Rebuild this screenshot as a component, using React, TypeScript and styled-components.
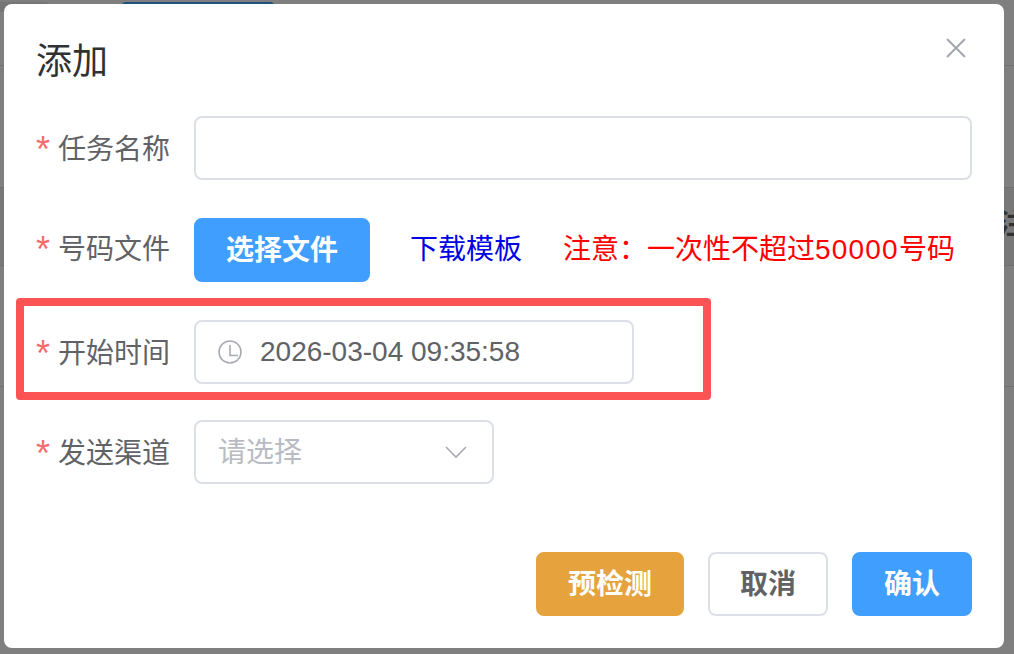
import * as React from 'react'
import styled, { createGlobalStyle } from 'styled-components'

const cjkStack = '"Liberation Sans", "Noto Sans CJK SC", sans-serif';

const GlobalStyle = createGlobalStyle`
    html, body {
        margin: 0;
        padding: 0;
        background: #7f7f7f;
    }
    * {
        box-sizing: border-box;
    }
`;

//=================================/
// what shows through the mask
const Overlay = styled.div`
    position: relative;
    width: 1014px;
    height: 654px;
    padding: 4px 10px 6px 4px;
    background: #7f7f7f;
    overflow: hidden;
    font-family: ${cjkStack};
`;

const PageButton = styled.div`
    position: absolute;
    top: 2px;
    left: 121px;
    width: 154px;
    height: 10px;
    border-radius: 6px;
    background: #20507f;
`;

const PageTab = styled.div`
    position: absolute;
    top: 2px;
    left: 0;
    width: 50px;
    height: 10px;
    border-radius: 0 6px 0 0;
    background: #767676;
`;

const PageLine = styled.div<{ $top: number }>`
    position: absolute;
    top: ${props => props.$top}px;
    left: 0;
    width: 100%;
    height: 1px;
    background: #707070;
`;

const PageBand = styled.div`
    position: absolute;
    top: 187px;
    left: 0;
    width: 100%;
    height: 79px;
    border-top: 1px solid #6f6f6f;
    border-bottom: 1px solid #6f6f6f;
    background: #787878;
`;

const PageGlyph = styled.span`
    position: absolute;
    top: 207px;
    left: 998px;
    font-size: 28px;
    line-height: 36px;
    font-weight: 700;
    color: #303133;
`;
//=================================/

const Dialog = styled.div`
    position: relative;
    width: 1000px;
    height: 644px;
    padding: 0 32px;
    border-radius: 8px;
    background: #fff;
`;

const Header = styled.div`
    display: flex;
    justify-content: space-between;
    height: 112px;
    padding-top: 33px;
`;

const Title = styled.h2`
    margin: 0;
    font-size: 36px;
    line-height: 50px;
    font-weight: 400;
    color: #303133;
`;

const CloseIcon = styled.svg`
    width: 20px;
    height: 20px;
    margin: 1px 6px 0 0;
    stroke: #a3a6ad;
    stroke-width: 2;
    fill: none;
`;

const Row = styled.div<{ $gap: number }>`
    position: relative;
    display: flex;
    align-items: center;
    height: 64px;
    margin-bottom: ${props => props.$gap}px;
`;

const Label = styled.label<{ $drop: number }>`
    display: flex;
    width: 158px;
    height: 40px;
    margin-top: ${props => props.$drop}px;
    flex: none;
    font-size: 28px;
    line-height: 40px;
    color: #606266;
`;

const Star = styled.span`
    width: 22px;
    font-size: 36px;
    line-height: 40px;
    color: #f56c6c;
`;

const Field = styled.div<{ $width: string }>`
    display: flex;
    align-items: center;
    width: ${props => props.$width};
    height: 64px;
    padding: 0 22px;
    border: 2px solid #dcdfe6;
    border-radius: 8px;
    background: #fff;
    font-size: 28px;
    color: #606266;
`;

const ClockIcon = styled.svg`
    width: 24px;
    height: 24px;
    margin-right: 18px;
    flex: none;
    fill: none;
    stroke: #a8abb2;
    stroke-width: 1.6;
`;

const Placeholder = styled.span`
    flex: 1;
    margin-bottom: 4px;
    color: #b8bbc2;
`;

const ChevronIcon = styled.svg`
    width: 22px;
    height: 13px;
    margin-right: 3px;
    flex: none;
    fill: none;
    stroke: #a8abb2;
    stroke-width: 1.6;
`;

const Button = styled.button<{ $bg: string; $fg: string; $line: string; $width: number }>`
    width: ${props => props.$width}px;
    height: 64px;
    padding: 0 0 4px;
    flex: none;
    border: 2px solid ${props => props.$line};
    border-radius: 8px;
    background: ${props => props.$bg};
    color: ${props => props.$fg};
    font-family: inherit;
    font-size: 28px;
    font-weight: 700;
`;

const DownloadLink = styled.a`
    margin: 0 0 6px 40px;
    font-size: 28px;
    color: #0000e6;
`;

const Notice = styled.span`
    margin: 0 0 6px 41px;
    font-size: 28px;
    color: #ff0000;
    white-space: nowrap;
`;

const NoticeDigits = styled.span`
    letter-spacing: 1.2px;
`;

const Highlight = styled.div`
    position: absolute;
    top: -22px;
    left: -20px;
    width: 695px;
    height: 102px;
    border: 8px solid #fc5454;
    border-radius: 4px;
    pointer-events: none;
`;

const Footer = styled.div`
    display: flex;
    justify-content: flex-end;
    gap: 24px;
    margin-top: 68px;
`;

const FormLabel: React.FC<{ text: string; drop?: number }> = ({ text, drop = 4 }) => (
    <Label $drop={drop}><Star>*</Star>{text}</Label>
);

export default function App() {
    return (
        <Overlay>
            <GlobalStyle />
            <PageTab />
            <PageButton />
            <PageLine $top={65} />
            <PageBand />
            <PageGlyph>注</PageGlyph>
            <PageLine $top={386} />
            <Dialog>
                <Header>
                    <Title>添加</Title>
                    <CloseIcon viewBox="0 0 20 20">
                        <path d="M1 1L19 19M19 1L1 19" />
                    </CloseIcon>
                </Header>

                <Row $gap={38}>
                    <FormLabel text="任务名称" />
                    <Field $width="778px" />
                </Row>

                <Row $gap={38}>
                    <FormLabel text="号码文件" drop={0} />
                    <Button $bg="#409eff" $fg="#fff" $line="#409eff" $width={176}>选择文件</Button>
                    <DownloadLink>下载模板</DownloadLink>
                    <Notice>注意：一次性不超过<NoticeDigits>50000</NoticeDigits>号码</Notice>
                </Row>

                <Row $gap={36}>
                    <FormLabel text="开始时间" />
                    <Field $width="440px">
                        <ClockIcon viewBox="0 0 24 24">
                            <circle cx="12" cy="12" r="11" />
                            <path d="M12 5V15.5H20" />
                        </ClockIcon>
                        2026-03-04 09:35:58
                    </Field>
                    <Highlight />
                </Row>

                <Row $gap={0}>
                    <FormLabel text="发送渠道" />
                    <Field $width="300px">
                        <Placeholder>请选择</Placeholder>
                        <ChevronIcon viewBox="0 0 22 13">
                            <path d="M1 1L11 11L21 1" />
                        </ChevronIcon>
                    </Field>
                </Row>

                <Footer>
                    <Button $bg="#e6a23c" $fg="#fff" $line="#e6a23c" $width={148}>预检测</Button>
                    <Button $bg="#fff" $fg="#606266" $line="#dcdfe6" $width={120}>取消</Button>
                    <Button $bg="#409eff" $fg="#fff" $line="#409eff" $width={120}>确认</Button>
                </Footer>
            </Dialog>
        </Overlay>
    );
}
